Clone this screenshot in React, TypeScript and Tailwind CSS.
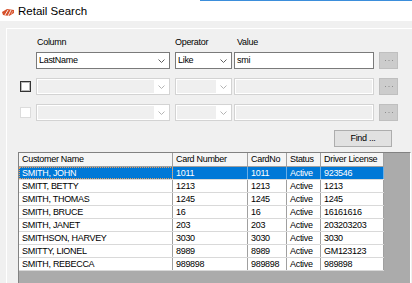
import React from "react";

const rows = [
  ["SMITH, JOHN", "1011", "1011", "Active", "923546"],
  ["SMITT, BETTY", "1213", "1213", "Active", "1213"],
  ["SMITH, THOMAS", "1245", "1245", "Active", "1245"],
  ["SMITH, BRUCE", "16", "16", "Active", "16161616"],
  ["SMITH, JANET", "203", "203", "Active", "203203203"],
  ["SMITHSON, HARVEY", "3030", "3030", "Active", "3030"],
  ["SMITTY, LIONEL", "8989", "8989", "Active", "GM123123"],
  ["SMITH, REBECCA", "989898", "989898", "Active", "989898"],
];

const widths = ["w-[154px]", "w-[75px]", "w-[39px]", "w-[34px]", "w-[63px]"];

function Chevron({ color }: { color: string }) {
  return (
    <svg width="7" height="4" viewBox="0 0 7 4">
      <polyline points="0.5,0.5 3.5,3.5 6.5,0.5" fill="none" stroke={color} strokeWidth="1" />
    </svg>
  );
}

function EnabledCombo({ w, text }: { w: string; text: string }) {
  return (
    <div className={`${w} h-[17px] border border-[#7a7a7a] bg-white flex items-center`}>
      <span className="flex-1 pl-[2px] text-black leading-[15px]">{text}</span>
      <div className="w-[14px] flex items-center justify-center pr-[2px]">
        <Chevron color="#606060" />
      </div>
    </div>
  );
}

function DisabledCombo({ w }: { w: string }) {
  return (
    <div className={`${w} h-[17px] border border-[#d3d3d3] bg-white flex p-px`}>
      <div className="flex-1 bg-[#efefef]" />
      <div className="w-[14px] flex items-center justify-center">
        <Chevron color="#b4b4b4" />
      </div>
    </div>
  );
}

function DotButton() {
  return (
    <div className="w-[19px] h-[17px] bg-[#cccccc] border border-[#bfbfbf] flex items-center justify-center">
      <svg width="8" height="1" viewBox="0 0 8 1">
        <rect x="0" y="0" width="1" height="1" fill="#8e8e8e" />
        <rect x="3.5" y="0" width="1" height="1" fill="#8e8e8e" />
        <rect x="7" y="0" width="1" height="1" fill="#8e8e8e" />
      </svg>
    </div>
  );
}

export default function App() {
  return (
    <div
      className="w-[412px] h-[283px] bg-[#f0f0f0] overflow-hidden flex flex-col text-[9px] tracking-[-0.3px] text-black"
      style={{ fontFamily: '"Liberation Sans", Arial, sans-serif' }}
    >
      {/* title bar */}
      <div className="h-[21px] bg-white flex flex-col shrink-0">
        <div className="h-px flex">
          <div className="w-[200px] bg-white" />
          <div className="flex-1 bg-[#3b8edb]" />
        </div>
        <div className="flex-1 flex items-center pl-[2px]">
          <svg width="13" height="9" viewBox="0 0 13 9" className="mt-[2px]">
            <polygon points="0,4 5,1 12,2 12,5 7,8 1,7" fill="#d6502a" />
            <line x1="3" y1="7" x2="6" y2="2" stroke="#fff" strokeWidth="0.9" />
            <line x1="6" y1="8" x2="9" y2="2" stroke="#fff" strokeWidth="0.9" />
            <line x1="9" y1="6" x2="11" y2="3" stroke="#f3b39b" strokeWidth="0.8" />
          </svg>
          <span className="ml-[3px] text-[11.5px] tracking-normal leading-[20px]">Retail Search</span>
        </div>
      </div>

      {/* group box */}
      <div className="mt-[7px] ml-[6px] flex-1 border-t border-l border-white flex flex-col pt-[8px]">
        {/* labels */}
        <div className="flex h-[11px] leading-[11px] pl-[29px]">
          <span className="w-[139px] pl-[1px]">Column</span>
          <span className="w-[59px]">Operator</span>
          <span className="pl-[3px]">Value</span>
        </div>

        {/* row 1 */}
        <div className="flex items-center mt-[4px] pl-[13px]">
          <div className="w-[11px] h-[11px]" />
          <div className="ml-[5px]">
            <EnabledCombo w="w-[134px]" text="LastName" />
          </div>
          <div className="ml-[5px]">
            <EnabledCombo w="w-[57px]" text="Like" />
          </div>
          <div className="ml-[2px] w-[140px] h-[17px] border border-[#7a7a7a] bg-white flex items-center pl-[2px] leading-[15px]">
            smi
          </div>
          <div className="ml-[5px]">
            <DotButton />
          </div>
        </div>

        {/* row 2 */}
        <div className="flex items-center mt-[9px] pl-[13px]">
          <div className="w-[11px] h-[11px] border border-[#333333] bg-white">
            <div className="w-full h-full border border-[#b8b8b8]" />
          </div>
          <div className="ml-[5px]">
            <DisabledCombo w="w-[134px]" />
          </div>
          <div className="ml-[5px]">
            <DisabledCombo w="w-[57px]" />
          </div>
          <div className="ml-[2px] w-[140px] h-[17px] border border-[#d3d3d3] bg-white p-px">
            <div className="w-full h-full bg-[#efefef]" />
          </div>
          <div className="ml-[5px]">
            <DotButton />
          </div>
        </div>

        {/* row 3 */}
        <div className="flex items-center mt-[9px] pl-[13px]">
          <div className="w-[11px] h-[11px] border border-[#dcdcdc] bg-white" />
          <div className="ml-[5px]">
            <DisabledCombo w="w-[134px]" />
          </div>
          <div className="ml-[5px]">
            <DisabledCombo w="w-[57px]" />
          </div>
          <div className="ml-[2px] w-[140px] h-[17px] border border-[#d3d3d3] bg-white p-px">
            <div className="w-full h-full bg-[#efefef]" />
          </div>
          <div className="ml-[5px]">
            <DotButton />
          </div>
        </div>

        {/* find button */}
        <div className="flex mt-[9px] pl-[327px]">
          <div className="w-[58px] h-[17px] bg-[#e1e1e1] border border-[#adadad] flex items-center justify-center leading-none">
            Find ...
          </div>
        </div>

        {/* grid */}
        <div className="mt-[5px] ml-[11px] w-[393px] flex-1 bg-[#ababab] border-t border-l border-[#828282] border-r border-r-white flex flex-col overflow-hidden">
          <div className="flex">
            <div className="flex flex-col">
              {/* header */}
              <div className="flex h-[14px] bg-[#f5f5f5] border-b border-[#a0a0a0]">
                {["Customer Name", "Card Number", "CardNo", "Status", "Driver License"].map((h, i) => (
                  <div
                    key={h}
                    className={`${widths[i]} border-r border-[#a0a0a0] pl-[3px] leading-[13px] whitespace-nowrap overflow-hidden`}
                  >
                    {h}
                  </div>
                ))}
              </div>
              {rows.map((r, ri) => {
                const sel = ri === 0;
                return (
                  <div
                    key={ri}
                    className={`flex h-[13px] border-b border-[#d9d9d9] ${sel ? "bg-[#0078d7] text-white" : "bg-white text-black"}`}
                  >
                    {r.map((c, ci) => (
                      <div
                        key={ci}
                        className={`${widths[ci]} border-r ${sel ? "border-[#6aaee6]" : "border-[#a0a0a0]"} pl-[3px] leading-[12px] whitespace-nowrap overflow-hidden ${
                          sel && ci === 0 ? "outline outline-1 outline-dotted outline-[#e8a060] -outline-offset-1" : ""
                        }`}
                      >
                        {c}
                      </div>
                    ))}
                  </div>
                );
              })}
            </div>
          </div>
        </div>
      </div>
    </div>
  );
}
